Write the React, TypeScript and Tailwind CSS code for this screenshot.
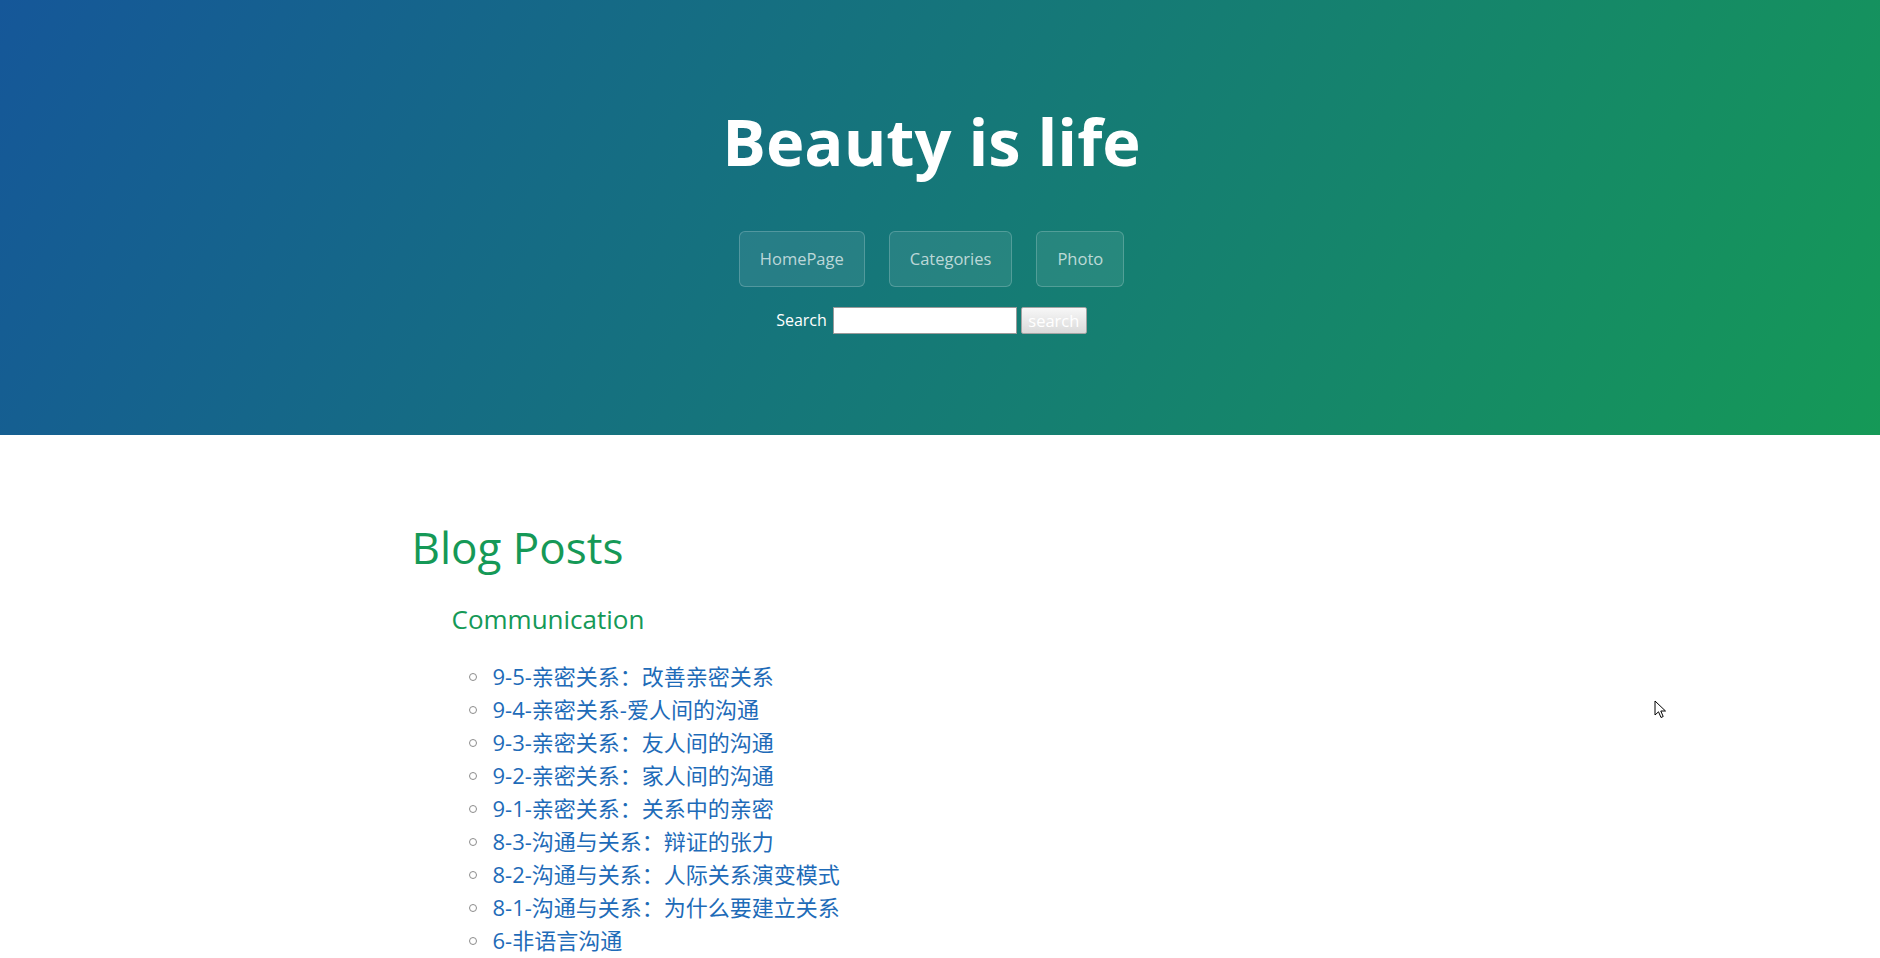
import React from 'react';

const POSTS = [
  '9-5-亲密关系：改善亲密关系',
  '9-4-亲密关系-爱人间的沟通',
  '9-3-亲密关系：友人间的沟通',
  '9-2-亲密关系：家人间的沟通',
  '9-1-亲密关系：关系中的亲密',
  '8-3-沟通与关系：辩证的张力',
  '8-2-沟通与关系：人际关系演变模式',
  '8-1-沟通与关系：为什么要建立关系',
  '6-非语言沟通',
];

const NAV = ['HomePage', 'Categories', 'Photo'];

export default function App() {
  return (
    <div className="relative min-h-[958px] bg-white font-['Open_Sans','Noto_Sans_CJK_SC',sans-serif] text-[#606c71]">
      {/* Header */}
      <header className="h-[435px] bg-[linear-gradient(120deg,#155799,#159957)] pr-[17px]">
        <div className="flex flex-col items-center pt-[92px]">
          <h1 className="text-[65px] leading-[99px] font-bold text-white">Beauty is life</h1>
          <nav className="mt-[40px] flex gap-[24px]">
            {NAV.map((item) => (
              <a
                key={item}
                href="#"
                className="flex h-[56px] items-center rounded-[6px] border border-white/20 bg-white/[0.08] px-[20px] text-[16.5px] text-white/70"
              >
                {item}
              </a>
            ))}
          </nav>
          <form className="mt-[20px] flex h-[27px] items-center">
            <label className="mr-[6px] text-[16px] leading-[27px] text-white">Search</label>
            <input
              type="text"
              className="h-[27px] w-[184px] border border-[#9a9a9a] bg-white"
            />
            <button
              type="button"
              className="ml-[4px] h-[27px] w-[66px] rounded-[2px] border border-[#a3a3a3] bg-[linear-gradient(#f7f7f7,#dadada)] text-[16.5px] leading-[24px] text-white"
            >
              search
            </button>
          </form>
        </div>
      </header>

      {/* Main content */}
      <main className="pr-[17px]">
        <div className="mx-auto w-[1280px] px-[120px] pt-[85px]">
          <h1 className="text-[44px] leading-[55px] font-normal text-[#159957]">Blog Posts</h1>
          <div className="pl-[40px]">
            <h3 className="mt-[28px] text-[26px] leading-[33px] font-normal text-[#159957]">Communication</h3>
            <ul className="mt-[24px] pl-[17px]">
              {POSTS.map((post) => (
                <li key={post} className="flex items-center text-[22px] leading-[33px]">
                  <span className="h-[8px] w-[8px] shrink-0 rounded-full border border-[#8c8c8c]" />
                  <a href="#" className="ml-[16px] text-[#1e6bb8]">
                    {post}
                  </a>
                </li>
              ))}
            </ul>
          </div>
        </div>
      </main>

      {/* Mouse pointer */}
      <svg className="absolute left-[1654px] top-[700px]" width="13" height="20" viewBox="0 0 13 20">
        <path d="M1 1 L1 15 L4.5 11.8 L7 17.5 L9.2 16.5 L6.8 11 L11.5 11 Z" fill="white" stroke="black" strokeWidth="1" strokeLinejoin="round" />
      </svg>
    </div>
  );
}
